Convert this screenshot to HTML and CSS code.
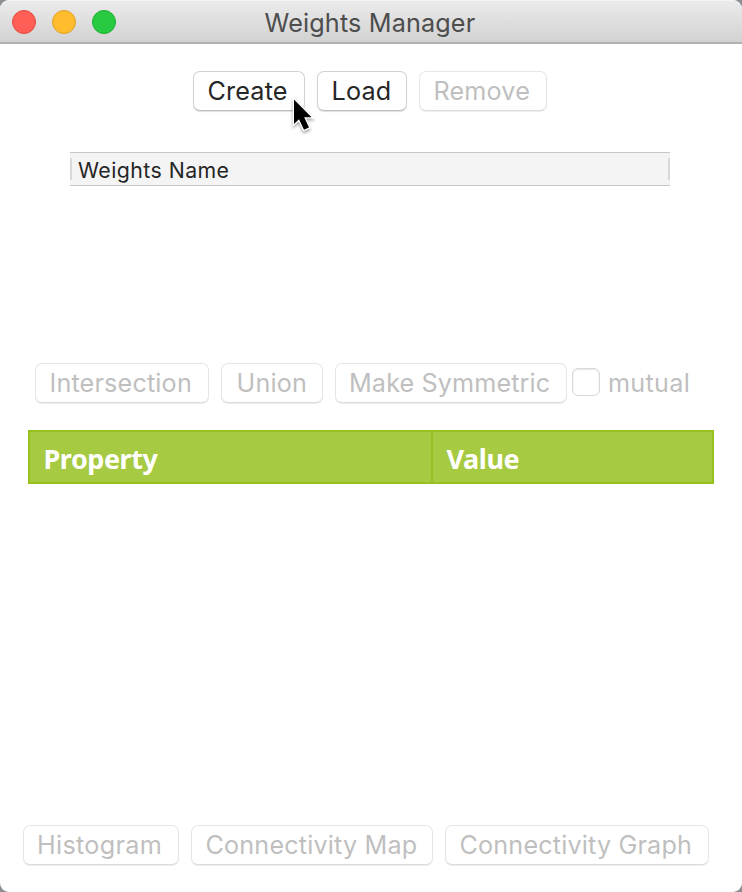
FILE: index.html
```html
<!DOCTYPE html>
<html lang="en">
<head>
<meta charset="utf-8">
<title>Weights Manager</title>
<link rel="stylesheet" href="styles.css">
</head>
<body>
<div class="window">
  <header class="titlebar">
    <div class="lights"><i class="light close"></i><i class="light minimize"></i><i class="light maximize"></i></div>
    <h1 class="title">Weights Manager</h1>
  </header>
  <div class="row row-top">
    <div class="anchor">
      <button class="btn create">Create</button>
      <svg class="cursor" width="28" height="40" viewBox="0 0 28 40">
        <path d="M4 3.5V28l5-4.8 5 10.6 5-2.3-4.8-10.3h7.3z" fill="#000" stroke="#fff" stroke-width="2.6" paint-order="stroke"/>
      </svg>
    </div>
    <button class="btn load">Load</button>
    <button class="btn remove" disabled>Remove</button>
  </div>
  <div class="list">
    <div class="list-head"><span>Weights Name</span></div>
  </div>
  <div class="row row-mid">
    <button class="btn intersection" disabled>Intersection</button>
    <button class="btn union" disabled>Union</button>
    <button class="btn symmetric" disabled>Make Symmetric</button>
    <label class="mutual"><span class="check"></span><span>mutual</span></label>
  </div>
  <div class="props">
    <div class="prop-head"><span>Property</span></div>
    <div class="prop-head"><span>Value</span></div>
  </div>
  <div class="row row-bottom">
    <button class="btn histogram" disabled>Histogram</button>
    <button class="btn map" disabled>Connectivity Map</button>
    <button class="btn graph" disabled>Connectivity Graph</button>
  </div>
</div>
</body>
</html>
```
FILE: styles.css
```css
* { box-sizing: border-box; }
body { margin: 0; background: #8b8d92; font-family: Inter, "Liberation Sans", sans-serif; }
.window { height: 892px; display: flex; flex-direction: column; background: #fff; border-radius: 9px; overflow: hidden; }
.titlebar { height: 44px; flex: none; display: grid; grid-template-columns: 264.5px 1fr; align-items: center; background: linear-gradient(#ebebeb, #d2d2d2); border-top: 1px solid #f5f5f5; border-bottom: 2px solid #b1b1b1; }
.lights { display: flex; gap: 16px; padding-left: 12px; }
.light { width: 24px; height: 24px; border-radius: 50%; border: 1px solid; }
.close { background: #ff5f57; border-color: #e2493f; }
.minimize { background: #ffbd2e; border-color: #dfa023; }
.maximize { background: #28ca41; border-color: #1dad2b; }
.title { margin: 0; padding-top: 2px; font-size: 25.2px; font-weight: 400; line-height: 30px; color: #4d4d4d; letter-spacing: .15px; white-space: nowrap; }
.row { display: flex; gap: 12px; height: 40px; flex: none; }
.row-top { margin: 27px 0 0 193px; }
.row-mid { margin: 177px 0 0 35px; }
.row-bottom { margin: 341px 0 0 23px; }
.anchor { position: relative; display: flex; }
.cursor { position: absolute; left: 97px; top: 25px; filter: drop-shadow(0 2px 1.5px rgba(0,0,0,.35)); z-index: 1; }
.btn { height: 40px; padding: 0 0 0 13.5px; border: 1px solid #d2d2d2; border-bottom-color: #bdbdbd; border-radius: 7px; background: #fff; box-shadow: 0 1px 1px rgba(0,0,0,.12); font: 400 25.2px/38px Inter, "Liberation Sans", sans-serif; letter-spacing: .16px; color: #262626; white-space: nowrap; text-align: left; }
.btn:disabled { color: #bfbfbf; border-color: #e6e6e6; border-bottom-color: #dbdbdb; box-shadow: 0 1px 1px rgba(0,0,0,.07); }
.create { width: 112px; }
.load { width: 90px; }
.remove { width: 128px; }
.intersection { width: 174px; }
.union { width: 102px; padding-left: 14.5px; }
.symmetric { width: 232px; padding-left: 13px; letter-spacing: .12px; }
.histogram { width: 156px; padding-left: 13px; letter-spacing: .3px; }
.map { width: 242px; }
.graph { width: 264px; }
.list { width: 600px; margin: 41px 0 0 70px; flex: none; }
.list-head { height: 34px; border-top: 1px solid #c8c8c8; border-bottom: 1px solid #c8c8c8; background: #f4f4f4; display: flex; align-items: center; justify-content: space-between; font-size: 21.3px; line-height: 32px; letter-spacing: .44px; color: #262626; }
.list-head::before, .list-head::after { content: ""; width: 2px; height: 22px; background: #d9d9d9; }
.list-head span { flex: 1; padding: 2px 0 0 6px; }
.mutual { display: flex; align-items: center; gap: 8px; margin-left: -7px; font-size: 25.2px; line-height: 40px; letter-spacing: .3px; color: #bfbfbf; }
.check { width: 28px; height: 28px; margin-top: -2px; border: 1px solid #d8d8d8; border-radius: 6px; background: #fff; box-shadow: inset 0 1px 2px rgba(0,0,0,.1); }
.props { flex: none; width: 686px; height: 54px; margin: 27px 0 0 28px; display: grid; grid-template-columns: 401px 1fr; gap: 2px; border: 2px solid #96c11f; background: #96c11f; }
.prop-head { height: 50px; background: #a6ca42; color: #fff; font: 700 27px/54px "Noto Sans", sans-serif; letter-spacing: -.45px; padding-left: 13.5px; }
```
